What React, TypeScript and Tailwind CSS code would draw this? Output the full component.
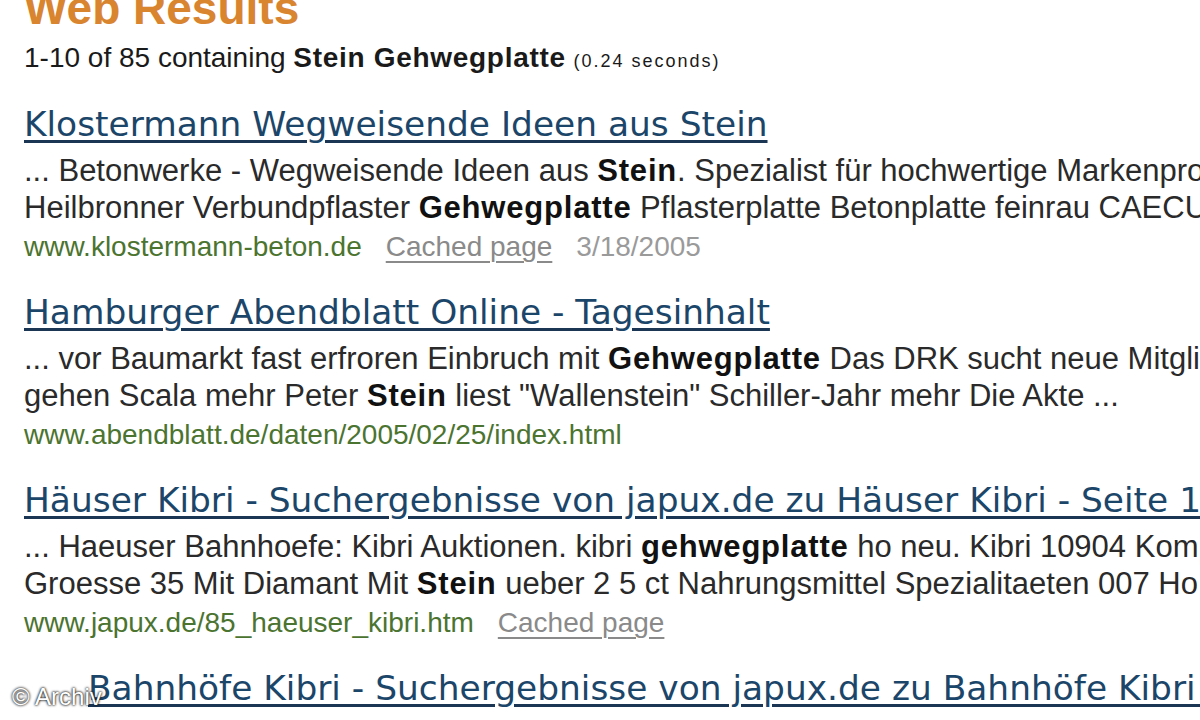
import React from 'react';

type Part = { t: string; b?: boolean };

interface Result {
  title: string;
  lines: Part[][];
  url: string;
  cached?: boolean;
  date?: string;
  indent?: boolean;
}

const results: Result[] = [
  {
    title: 'Klostermann Wegweisende Ideen aus Stein',
    lines: [
      [
        { t: '... Betonwerke - Wegweisende Ideen aus ' },
        { t: 'Stein', b: true },
        { t: '. Spezialist für hochwertige Markenprodukte' },
      ],
      [
        { t: 'Heilbronner Verbundpflaster ' },
        { t: 'Gehwegplatte', b: true },
        { t: ' Pflasterplatte Betonplatte feinrau CAECUS' },
      ],
    ],
    url: 'www.klostermann-beton.de',
    cached: true,
    date: '3/18/2005',
  },
  {
    title: 'Hamburger Abendblatt Online - Tagesinhalt',
    lines: [
      [
        { t: '... vor Baumarkt fast erfroren Einbruch mit ' },
        { t: 'Gehwegplatte', b: true },
        { t: ' Das DRK sucht neue Mitglieder' },
      ],
      [
        { t: 'gehen Scala mehr Peter ' },
        { t: 'Stein', b: true },
        { t: ' liest "Wallenstein" Schiller-Jahr mehr Die Akte ...' },
      ],
    ],
    url: 'www.abendblatt.de/daten/2005/02/25/index.html',
  },
  {
    title: 'Häuser Kibri - Suchergebnisse von japux.de zu Häuser Kibri - Seite 1',
    lines: [
      [
        { t: '... Haeuser Bahnhoefe: Kibri Auktionen. kibri ' },
        { t: 'gehwegplatte', b: true },
        { t: ' ho neu. Kibri 10904 Komplettset' },
      ],
      [
        { t: 'Groesse 35 Mit Diamant Mit ' },
        { t: 'Stein', b: true },
        { t: ' ueber 2 5 ct Nahrungsmittel Spezialitaeten 007 Ho ...' },
      ],
    ],
    url: 'www.japux.de/85_haeuser_kibri.htm',
    cached: true,
  },
  {
    title: 'Bahnhöfe Kibri - Suchergebnisse von japux.de zu Bahnhöfe Kibri - Seite 1',
    lines: [],
    url: '',
    indent: true,
  },
];

function ResultItem({ r }: { r: Result }) {
  return (
    <div className={r.indent ? 'pl-[64px]' : ''}>
      <div className="h-[44px] leading-[44px] whitespace-nowrap font-['DejaVu_Sans',sans-serif] text-[34.4px] text-[#1c4669] underline decoration-[3px] decoration-[#1a3654] underline-offset-[4px]">
        {r.title}
      </div>
      {r.lines.length > 0 && (
        <div className="mt-[6px] font-['Liberation_Sans',Arial,sans-serif] text-[31px] leading-[37px] text-[#2a2a2a]">
          {r.lines.map((line, i) => (
            <div key={i} className="whitespace-nowrap">
              {line.map((p, j) =>
                p.b ? (
                  <b key={j} className="font-bold text-[#111] tracking-[0.8px]">
                    {p.t}
                  </b>
                ) : (
                  <span key={j}>{p.t}</span>
                )
              )}
            </div>
          ))}
        </div>
      )}
      {r.url && (
        <div className="flex gap-[24px] whitespace-nowrap font-['Liberation_Sans',Arial,sans-serif] text-[28px] leading-[42px]">
          <span className="text-[#4b7430]">{r.url}</span>
          {r.cached && <span className="text-[#8a8a8a] underline decoration-[2px] underline-offset-[5px]">Cached page</span>}
          {r.date && <span className="text-[#9a9a9a]">{r.date}</span>}
        </div>
      )}
    </div>
  );
}

export default function App() {
  return (
    <div className="relative w-[1200px] h-[720px] overflow-hidden bg-white">
      <div className="pl-[24px]">
        <div className="-mt-[15px] font-['Liberation_Sans',Arial,sans-serif] font-bold text-[46px] leading-[46px] text-[#d9842f]">
          Web Results
        </div>
        <div className="mt-[9px] whitespace-nowrap font-['Liberation_Sans',Arial,sans-serif] text-[28px] leading-[36px] text-[#1a1a1a]">
          1-10 of 85 containing <b className="font-bold tracking-[0.7px]">Stein Gehwegplatte</b>{' '}
          <span className="text-[18px] tracking-[2px]">(0.24 seconds)</span>
        </div>
        <div className="mt-[23px] flex flex-col gap-[22px]">
          {results.map((r, i) => (
            <ResultItem key={i} r={r} />
          ))}
        </div>
      </div>
      <div className="absolute left-[12px] top-[683px] font-['Liberation_Sans',Arial,sans-serif] text-[24px] leading-[28px] text-white [text-shadow:0_0_3px_#000,0_0_2px_#333]">
        © Archiv
      </div>
    </div>
  );
}
